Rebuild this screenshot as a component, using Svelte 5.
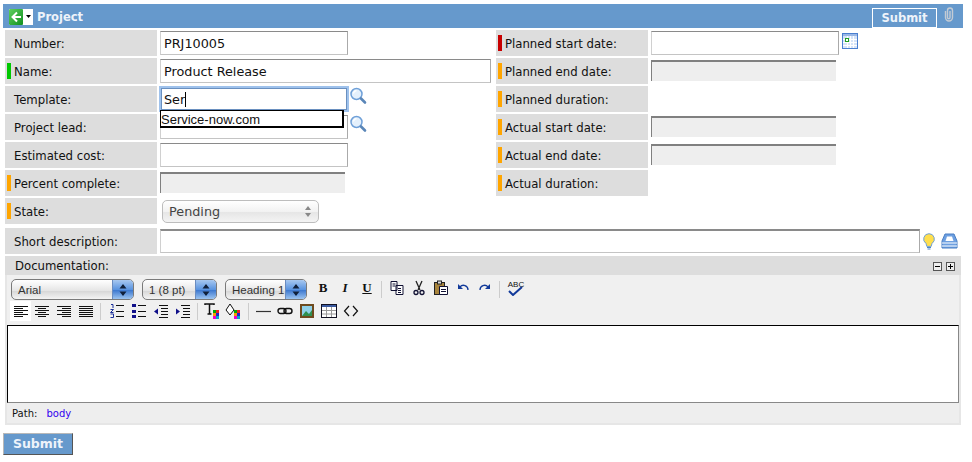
<script>
  const left = [
    { label: 'Number:', value: 'PRJ10005', kind: 'input' },
    { label: 'Name:', mark: 'green', value: 'Product Release', kind: 'wide' },
    { label: 'Template:', value: 'Ser', kind: 'focus', lookup: true },
    { label: 'Project lead:', kind: 'input', lookup: true },
    { label: 'Estimated cost:', kind: 'input' },
    { label: 'Percent complete:', mark: 'orange', kind: 'ro' },
    { label: 'State:', mark: 'orange', kind: 'select' }
  ];
  const right = [
    { label: 'Planned start date:', mark: 'red', kind: 'date' },
    { label: 'Planned end date:', mark: 'orange', kind: 'ro' },
    { label: 'Planned duration:', mark: 'orange', kind: 'none' },
    { label: 'Actual start date:', mark: 'orange', kind: 'ro' },
    { label: 'Actual end date:', mark: 'orange', kind: 'ro' },
    { label: 'Actual duration:', mark: 'orange', kind: 'none' }
  ];
</script>

{#snippet lookup()}
  <svg class="lookup" width="18" height="18" viewBox="0 0 18 18">
    <circle cx="7.500" cy="7" r="5.500" fill="#e4f0fc" stroke="#6fa0d8" stroke-width="1.500" />
    <path d="M4.500 6.500a3.200 3.200 0 0 1 3-2.800" fill="none" stroke="#fff" stroke-width="1.200" />
    <path d="M12 11.500l4 4" stroke="#5a86b8" stroke-width="2.600" stroke-linecap="round" />
  </svg>
{/snippet}

{#snippet row(r)}
  <div class="row">
    <div class="label">
      <span class="mark {r.mark ?? ''}"></span>{r.label}
    </div>
    <div class="field">
      {#if r.kind === 'input'}
        <div class="input">{r.value ?? ''}</div>
      {:else if r.kind === 'wide'}
        <div class="input wide">{r.value}</div>
      {:else if r.kind === 'focus'}
        <div class="input focus">{r.value}<i class="caret"></i></div>
      {:else if r.kind === 'ro'}
        <div class="ro"></div>
      {:else if r.kind === 'date'}
        <div class="input date"></div>
        <svg class="cal" width="16" height="16" viewBox="0 0 16 16">
          <rect x="0.500" y="0.500" width="15" height="15" fill="#d6e4f8" stroke="#4a7fd0" />
          <rect x="1" y="1" width="14" height="2" fill="#9ab8e6" />
          <path d="M1 6.500h14M1 9.500h14M1 12.500h14M5.500 3v12M8.500 3v12M11.500 3v12" stroke="#fff" />
          <rect x="3.500" y="5.500" width="3" height="3" fill="#fff" stroke="#1fa01f" />
        </svg>
      {:else if r.kind === 'select'}
        <div class="state">Pending
          <svg width="8" height="13" viewBox="0 0 8 13"><path d="M4 1l3 4H1zM4 12L1 8h6z" fill="#888" /></svg>
        </div>
      {/if}
      {#if r.lookup}{@render lookup()}{/if}
      {#if r.kind === 'focus'}
        <div class="ac">Service-now.com</div>
      {/if}
    </div>
  </div>
{/snippet}

{#snippet osel(text, cls)}
  <div class="osel {cls}">
    <span>{text}</span>
    <b><svg width="8" height="14" viewBox="0 0 8 14"><path d="M4 1l3.500 4.500h-7zM4 13L.5 8.500h7z" fill="#10203a" /></svg></b>
  </div>
{/snippet}

<div class="page">
  <header class="bar">
    <svg class="back" width="24" height="16" viewBox="0 0 24 16">
      <defs>
        <linearGradient id="gb" x1="0" y1="0" x2="1" y2="1"><stop offset="0" stop-color="#5fd05f" /><stop offset="1" stop-color="#0f8f1f" /></linearGradient>
      </defs>
      <rect width="15" height="16" fill="#fff" />
      <rect x="0" y="0" width="14" height="16" rx="1" fill="url(#gb)" />
      <path d="M12 8H4M8 3.500L3.500 8 8 12.500" fill="none" stroke="#fff" stroke-width="2" />
      <rect x="15" width="9" height="16" fill="#fff" />
      <path d="M17 6h5l-2.500 3z" fill="#000" />
    </svg>
    <span class="title">Project</span>
    <span class="btn-top">Submit</span>
    <svg class="clip" width="12" height="15" viewBox="0 0 12 15">
      <path d="M2.500 4v6.500a3.500 3.500 0 0 0 7 0V3.500a2.500 2.500 0 0 0-5 0v7a1 1 0 0 0 2.500 0V4" fill="none" stroke="#c4cbd4" stroke-width="1.400" />
    </svg>
  </header>

  <div class="cols">
    <div class="col">{#each left as r}{@render row(r)}{/each}</div>
    <div class="col">{#each right as r}{@render row(r)}{/each}</div>
  </div>

  <div class="short">
    <div class="label">Short description:</div>
    <div class="input long"></div>
    <svg class="bulb" width="12" height="17" viewBox="0 0 12 17">
      <path d="M6 .7a5.300 5.300 0 0 0-3 9.700l.8 3h4.400l.8-3a5.300 5.300 0 0 0-3-9.700z" fill="#ffdf4d" stroke="#6fa0d8" />
      <path d="M4 14.500h4M4.500 16h3" stroke="#4f86c6" />
    </svg>
    <svg class="tray" width="17" height="16" viewBox="0 0 17 16">
      <path d="M4 1h9l3 7v7H1V8z" fill="#6d9fe0" stroke="#4a7fc4" />
      <path d="M4.500 8l1.500-4.500h5L12.500 8z" fill="#fff" />
      <path d="M1 10h15M1 13h15" stroke="#fff" />
    </svg>
  </div>

  <section class="doc">
    <div class="dochead">
      <span class="dlabel">Documentation:</span>
      <span class="pm">
        <i><svg width="7" height="7" viewBox="0 0 7 7"><path d="M1 3.500h5" stroke="#000" /></svg></i>
        <i><svg width="7" height="7" viewBox="0 0 7 7"><path d="M1 3.500h5M3.500 1v5" stroke="#000" /></svg></i>
      </span>
    </div>
    <div class="editor">
      <div class="tools">
        <div class="tline first">
          {@render osel('Arial', 'w1')}
          {@render osel('1 (8 pt)', 'w2')}
          {@render osel('Heading 1', 'w3')}
          <span class="tb bold">B</span>
          <span class="tb ital">I</span>
          <span class="tb und">U</span>
          <span class="sep"></span>
          <svg class="ic copy" width="16" height="16" viewBox="0 0 16 16"><path d="M2 1.500h6v9H2zM7 5.500h7v9H7z" fill="#fff" stroke="#113" /><path d="M9 8.500h3M9 10.500h3M9 12.500h3M3.500 4h3M3.500 6h3" stroke="#113" /></svg>
          <svg class="ic" width="16" height="16" viewBox="0 0 16 16"><path d="M5 1l4 9M11 1L7 10" stroke="#222" stroke-width="1.300" /><circle cx="5" cy="12.500" r="2" fill="none" stroke="#113" stroke-width="1.300" /><circle cx="11" cy="12.500" r="2" fill="none" stroke="#113" stroke-width="1.300" /></svg>
          <svg class="ic" width="16" height="16" viewBox="0 0 16 16"><rect x="1.500" y="2.500" width="10" height="12" fill="#a8843c" stroke="#222" /><rect x="4.500" y="1" width="4" height="3" fill="#ddd" stroke="#222" /><path d="M6.500 6.500h8v8h-8z" fill="#fff" stroke="#113" /><path d="M8 9.500h5M8 11.500h5" stroke="#113" /></svg>
          <svg class="ic" width="16" height="16" viewBox="0 0 16 16"><path d="M13 10a4.500 4.500 0 0 0-8-3" fill="none" stroke="#123a9a" stroke-width="1.300" /><path d="M3 4v5h5z" fill="#123a9a" /></svg>
          <svg class="ic" width="16" height="16" viewBox="0 0 16 16"><path d="M3 10a4.500 4.500 0 0 1 8-3" fill="none" stroke="#123a9a" stroke-width="1.300" /><path d="M13 4v5H8z" fill="#123a9a" /></svg>
          <span class="sep"></span>
          <span class="abc">ABC<svg width="18" height="10" viewBox="0 0 18 10"><path d="M2 5l4 4 9-8" fill="none" stroke="#123a9a" stroke-width="2" /></svg></span>
        </div>
        <div class="tline second">
          <span class="al active"><svg width="14" height="11" viewBox="0 0 14 11"><path d="M0 .5h14M0 2.500h9M0 4.500h14M0 6.500h9M0 8.500h14M0 10.500h9" stroke="#111" /></svg></span>
          <span class="al"><svg width="14" height="11" viewBox="0 0 14 11"><path d="M0 .5h14M3 2.500h8M0 4.500h14M3 6.500h8M0 8.500h14M3 10.500h8" stroke="#111" /></svg></span>
          <span class="al"><svg width="14" height="11" viewBox="0 0 14 11"><path d="M0 .5h14M5 2.500h9M0 4.500h14M5 6.500h9M0 8.500h14M5 10.500h9" stroke="#111" /></svg></span>
          <span class="al"><svg width="14" height="11" viewBox="0 0 14 11"><path d="M0 .5h14M0 2.500h14M0 4.500h14M0 6.500h14M0 8.500h14M0 10.500h14" stroke="#111" /></svg></span>
          <span class="sep s1"></span>
          <svg class="ic" width="16" height="16" viewBox="0 0 16 16"><path d="M2 1.500h2v3.500M1.500 6.500h3l-3 3h3M1.500 11h3v3.500h-3" fill="none" stroke="#1a2f9a" /><path d="M7 2.500h8M7 8.500h8M7 13.500h8" stroke="#111" /></svg>
          <svg class="ic" width="16" height="16" viewBox="0 0 16 16"><path d="M1 1h4v3H1zM1 7h4v3H1zM1 12h4v3H1z" fill="#10108a" /><path d="M7 2.500h8M7 8.500h8M7 13.500h8" stroke="#111" /></svg>
          <svg class="ic" width="16" height="16" viewBox="0 0 16 16"><path d="M6 2.500h9M8 5.500h7M8 8.500h7M8 11.500h7M6 14.500h9" stroke="#111" /><path d="M1 8.500l4-3v6z" fill="#10108a" /></svg>
          <svg class="ic" width="16" height="16" viewBox="0 0 16 16"><path d="M6 2.500h9M8 5.500h7M8 8.500h7M8 11.500h7M6 14.500h9" stroke="#111" /><path d="M5 8.500l-4-3v6z" fill="#10108a" /></svg>
          <span class="sep"></span>
          <svg class="ic" width="17" height="17" viewBox="0 0 17 17"><path d="M1 2V1h9v1M5.500 1v10M3.500 11h4" fill="none" stroke="#111" stroke-width="1.500" /><rect x="9" y="7" width="3" height="3" fill="#0a0" /><rect x="12" y="7" width="3" height="3" fill="#e22" /><rect x="9" y="10" width="3" height="3" fill="#f90" /><rect x="12" y="10" width="3" height="3" fill="#22c" /><rect x="9" y="13" width="3" height="3" fill="#e0c" /><rect x="12" y="13" width="3" height="3" fill="#0ac" /></svg>
          <svg class="ic bucket" width="17" height="17" viewBox="0 0 17 17"><path d="M5 1L1 7l4 5 4-5z" fill="#fff" stroke="#111" /><rect x="9" y="7" width="3" height="3" fill="#0a0" /><rect x="12" y="7" width="3" height="3" fill="#e22" /><rect x="9" y="10" width="3" height="3" fill="#f90" /><rect x="12" y="10" width="3" height="3" fill="#22c" /><rect x="9" y="13" width="3" height="3" fill="#e0c" /><rect x="12" y="13" width="3" height="3" fill="#0ac" /></svg>
          <span class="sep"></span>
          <svg class="ic" width="16" height="16" viewBox="0 0 16 16"><path d="M1 8.500h15" stroke="#333" stroke-width="1.200" /></svg>
          <svg class="ic" width="16" height="16" viewBox="0 0 16 16"><rect x="1" y="5.500" width="8" height="5" rx="2.500" fill="none" stroke="#111" stroke-width="1.400" /><rect x="7" y="5.500" width="8" height="5" rx="2.500" fill="none" stroke="#111" stroke-width="1.400" /></svg>
          <svg class="ic" width="16" height="16" viewBox="0 0 16 16"><rect x="1" y="1" width="14" height="14" fill="#6e4a1e" /><rect x="3" y="3" width="10" height="10" fill="#8fd0e8" /><path d="M3 13l4-5 3 3 3-4v6z" fill="#2f8f4f" /></svg>
          <svg class="ic" width="16" height="16" viewBox="0 0 16 16"><rect x=".5" y="1.500" width="15" height="13" fill="#fff" stroke="#112" /><rect x="1" y="2" width="14" height="2" fill="#3a5aa0" /><path d="M1 7.500h14M1 11h14M5.500 4v10M10.500 4v10" stroke="#999" /></svg>
          <svg class="ic" width="16" height="16" viewBox="0 0 16 16"><path d="M6 3L1.500 8 6 13M10 3l4.500 5L10 13" fill="none" stroke="#111" stroke-width="1.200" /></svg>
        </div>
      </div>
      <div class="area"></div>
      <div class="path">Path: <a href="#body">body</a></div>
    </div>
  </section>

  <div class="foot"><span class="btn-bottom">Submit</span></div>
</div>

<style>
  :global(body) { margin: 0; background: #fff; }
  .page {
    width: 972px; height: 462px; box-sizing: border-box; padding: 4px 9px 0 3px; overflow: hidden;
    font: 11.7px/1 "DejaVu Sans", sans-serif; color: #111;
  }
  .bar {
    height: 24px; background: #6699cc; display: flex; align-items: center; padding: 0 6px 0 6px; color: #fff;
  }
  .back { margin-right: 4px; margin-top: 1px; }
  .title { font-weight: bold; font-size: 11.5px; color: #eef3fa; flex: 1; padding-top: 3px; }
  .btn-top {
    border: 1px solid #fff; width: 63px; height: 18px; text-align: center;
    line-height: 19px; font-weight: bold; font-size: 11.5px; color: #eef3fa; margin-top: 3px; margin-right: 6px;
  }
  .clip { margin-top: -4px; margin-right: 2px; }
  .cols { display: flex; padding: 2px 0 0 2px; }
  .col { display: flex; flex-direction: column; gap: 2px; }
  .col:first-child { width: 491px; }
  .row { display: flex; height: 26px; gap: 3px; }
  .label {
    width: 152px; height: 26px; background: #dddddd; display: flex; align-items: center; flex: none;
    padding: 3px 0 0 9px; box-sizing: border-box; position: relative;
  }
  .mark { position: absolute; left: 2px; top: 5px; width: 4px; height: 16px; }
  .mark.green { background: #00c800; }
  .mark.orange { background: #ffa500; }
  .mark.red { background: #c80000; }
  .field { position: relative; display: flex; align-items: flex-start; }
  .input {
    width: 188px; height: 24px; box-sizing: border-box; margin-top: 1px; background: #fff;
    border: 1px solid #c4c4c4; border-top-color: #8a8a8a; border-left-color: #d0d0d0; border-right-color: #aaa;
    font-size: 12.8px; line-height: 23px; padding-left: 3px;
  }
  .wide { width: 331px; }
  .date { width: 188px; }
  .focus {
    border: 1px solid #6a90c0; box-shadow: 0 0 0 2px #9fc2ec; display: flex; align-items: center; height: 22px; margin-top: 2px;
    width: 186px; margin-left: 1px; line-height: 20px; padding: 1px 0 0 2px;
  }
  .caret { width: 1px; height: 15px; background: #000; }
  .lookup { margin: 1px 0 0 1px; }
  .focus + .lookup { margin-left: 2px; }
  .ac {
    position: absolute; left: 0; top: 24px; width: 184px; height: 18px; box-sizing: border-box;
    border: 1px solid #000; border-right-width: 2px; border-bottom-width: 2px; background: #fff; font: 13px/17px "Liberation Sans", sans-serif;
    z-index: 2;
  }
  .ro {
    width: 185px; height: 21px; margin-top: 2px; box-sizing: border-box; background: #eeeeee;
    border-top: 2px solid #808080; border-left: 1px solid #808080;
  }
  .cal { margin: 3px 0 0 3px; }
  .state {
    width: 157px; height: 23px; margin: 2px 0 0 2px; box-sizing: border-box; border: 1px solid #bdbdbd; border-radius: 5px;
    background: linear-gradient(#fff, #f2f2f2 50%, #e6e6e6 55%, #f4f4f4); font-size: 12.8px; line-height: 21px; padding: 0 6px 0 6px; color: #444;
    display: flex; align-items: center; justify-content: space-between;
  }
  .short { display: flex; gap: 3px; margin: 4px 0 0 2px; height: 26px; align-items: flex-start; }
  .long { width: 760px; border-top-width: 2px; margin-top: 1px; height: 24px; }
  .bulb { margin-top: 5px; }
  .tray { margin: 5px 0 0 3px; }
  .doc { margin: 2px 0 0 2px; width: 956px; }
  .dochead {
    height: 19px; background: #dddddd; display: flex; justify-content: space-between; align-items: center; padding: 0 6px 0 10px;
  }
  .dlabel { padding-top: 2px; }
  .pm { display: flex; gap: 4px; margin-top: 1px; }
  .pm i { width: 9px; height: 9px; box-sizing: border-box; display: block; border: 1px solid #555; background: #eee; line-height: 0; }
  .editor { border: 2px solid #e6e6e6; border-top: 0; }
  .tools { background: #f0f0f0; height: 50px; padding: 3px 0 0 4px; box-sizing: border-box; }
  .tline { display: flex; align-items: center; height: 23px; }
  .second { height: 20px; margin-left: -1px; }
  .osel {
    height: 21px; box-sizing: border-box; border: 1px solid #7a7a7a; border-radius: 5px; display: flex; justify-content: space-between;
    background: linear-gradient(#fff, #e6e6e6 55%, #d8d8d8 60%, #f4f4f4); overflow: hidden; line-height: 21px; margin-right: 8px;
    color: #333;
  }
  .osel span { padding-left: 6px; font: 11.5px/21px "Liberation Sans", sans-serif; white-space: nowrap; }
  .osel b { width: 20px; flex: none; background: linear-gradient(#a8c8f0, #5a94e0 50%, #3f7ad0 55%, #9cc4f0); display: flex; align-items: center; justify-content: center; border-left: 1px solid #6a8cc0; }
  .w1 { width: 123px; }
  .w2 { width: 75px; }
  .w3 { width: 82px; margin-right: 5px; }
  .tb { width: 22px; text-align: center; font: bold 13px "Liberation Serif", serif; color: #111; margin-top: -3px; }
  .ital { font-style: italic; }
  .und { text-decoration: underline; }
  .sep { width: 1px; height: 17px; background: #ccc; margin: 0 3px; flex: none; }
  .s1 { margin-right: 5px; }
  .ic { flex: none; margin: 0 3px; }
  .first .ic { margin-top: -3px; }
  .first .copy { margin-left: 4px; }
  .bucket { margin-left: 1px; }
  .abc { display: flex; flex-direction: column; align-items: center; font: 8px/7px "Liberation Sans", sans-serif; margin: -3px 0 0 4px; color: #111; }
  .abc svg { margin-top: -2px; }
  .al { width: 22px; height: 20px; display: flex; align-items: center; justify-content: center; flex: none; }
  .al.active { background: #fff; width: 21px; }
  .area { height: 78px; box-sizing: border-box; border: 1px solid #000; border-bottom-color: #888; border-right-color: #888; background: #fff; }
  .path { height: 20px; background: #eeeeee; font-size: 10px; line-height: 22px; padding-left: 5px; }
  .path a { color: #3300ee; text-decoration: none; margin-left: 6px; font-size: 10px; }
  .foot { margin-top: 8px; }
  .btn-bottom {
    display: block; width: 70px; height: 22px; box-sizing: border-box; background: #6699cc; color: #eef3fa; font-weight: bold; font-size: 12.5px;
    text-align: center; line-height: 20px; border: 1px solid; border-color: #b8b8b8 #555 #555 #b8b8b8;
  }
</style>
